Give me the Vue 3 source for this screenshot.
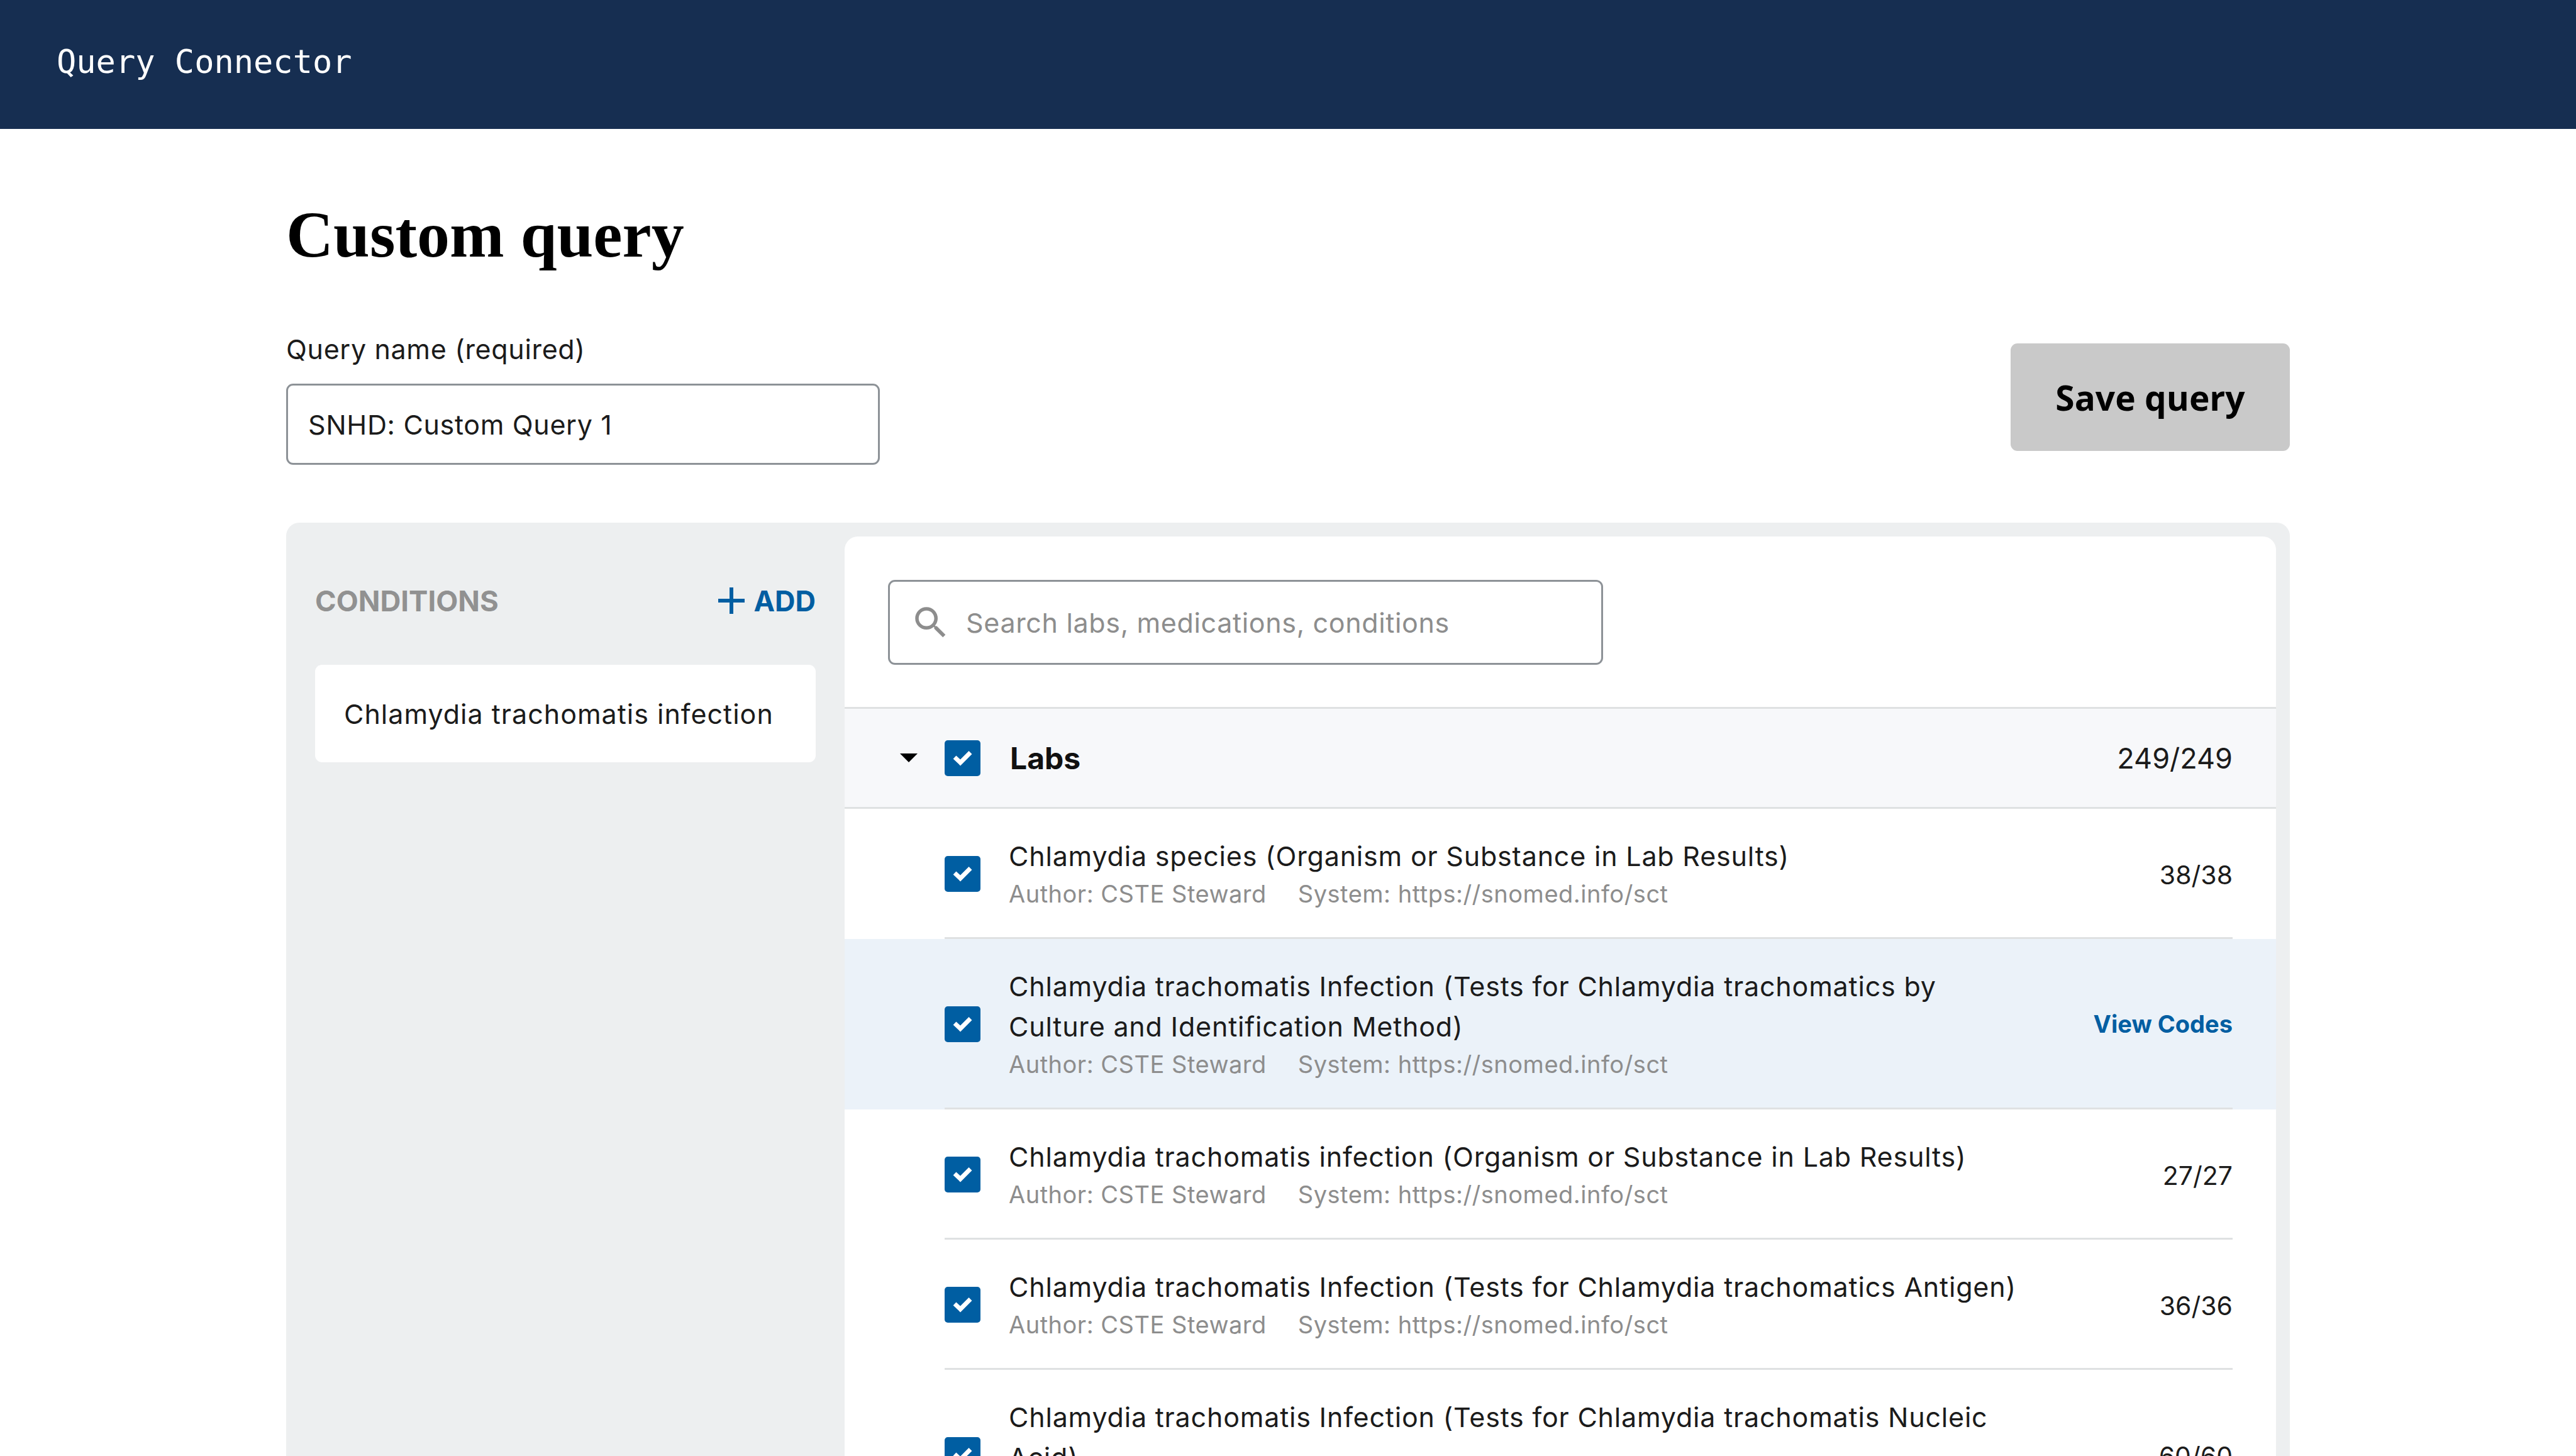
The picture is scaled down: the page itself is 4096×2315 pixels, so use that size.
<template>
  <div class="app">
    <header class="topbar">
      <span class="brand">Query Connector</span>
    </header>

    <main class="page">
      <h1 class="title">Custom query</h1>

      <div class="form-row">
        <label class="field">
          <span class="field-label">Query name (required)</span>
          <input class="field-input" type="text" value="SNHD: Custom Query 1" />
        </label>
        <button type="button" class="save-btn">Save query</button>
      </div>

      <section class="panel">
        <aside class="sidebar">
          <div class="sidebar-head">
            <span class="sidebar-title">CONDITIONS</span>
            <button type="button" class="add-btn">
              <svg class="add-icon" viewBox="0 0 42 42" aria-hidden="true">
                <path d="M21 0v42M0 21h42" fill="none" stroke="currentColor" stroke-width="6" />
              </svg>
              ADD
            </button>
          </div>
          <div class="condition-card">Chlamydia trachomatis infection</div>
        </aside>

        <div class="content">
          <div class="search-wrap">
            <div class="search-box">
              <svg class="search-icon" viewBox="0 0 24 24" aria-hidden="true">
                <path
                  d="M15.5 14h-.79l-.28-.27A6.471 6.471 0 0 0 16 9.5 6.5 6.5 0 1 0 9.5 16c1.61 0 3.09-.59 4.23-1.57l.27.28v.79l5 4.99L20.49 19l-4.99-5zm-6 0C7.01 14 5 11.99 5 9.5S7.01 5 9.5 5 14 7.01 14 9.5 11.99 14 9.5 14z"
                  fill="currentColor"
                />
              </svg>
              <input class="search-input" type="text" placeholder="Search labs, medications, conditions" />
            </div>
          </div>

          <div class="group-head">
            <span class="caret"></span>
            <span class="check">
              <svg viewBox="0 0 57 57" aria-hidden="true">
                <path d="M16 27l9 8.500 16-16" fill="none" stroke="#fff" stroke-width="7" />
              </svg>
            </span>
            <span class="group-name">Labs</span>
            <span class="group-count">249/249</span>
          </div>

          <div v-for="row in rows" :key="row.name" class="row" :class="{ 'row-active': row.active }">
            <div class="row-inner">
              <span class="check">
                <svg viewBox="0 0 57 57" aria-hidden="true">
                  <path d="M16 27l9 8.500 16-16" fill="none" stroke="#fff" stroke-width="7" />
                </svg>
              </span>
              <div class="row-text">
                <div class="row-name">{{ row.name }}</div>
                <div class="row-meta">
                  <span>Author: CSTE Steward</span>
                  <span>System: https://snomed.info/sct</span>
                </div>
              </div>
              <a v-if="row.active" class="view-codes">View Codes</a>
              <span v-else class="row-count">{{ row.count }}</span>
            </div>
          </div>
        </div>
      </section>
    </main>
  </div>
</template>

<script setup>
const rows = [
  { name: "Chlamydia species (Organism or Substance in Lab Results)", count: "38/38" },
  {
    name: "Chlamydia trachomatis Infection (Tests for Chlamydia trachomatics by Culture and Identification Method)",
    count: "41/41",
    active: true,
  },
  { name: "Chlamydia trachomatis infection (Organism or Substance in Lab Results)", count: "27/27" },
  { name: "Chlamydia trachomatis Infection (Tests for Chlamydia trachomatics Antigen)", count: "36/36" },
  { name: "Chlamydia trachomatis Infection (Tests for Chlamydia trachomatis Nucleic Acid)", count: "60/60" },
];
</script>

<style>
html,
body {
  margin: 0;
  background: #fff;
}
</style>

<style scoped>
.app {
  height: 2315px;
  overflow: hidden;
  font-family: Inter, "Liberation Sans", sans-serif;
  color: #1b1b1b;
}

.topbar {
  height: 205px;
  box-sizing: border-box;
  padding-left: 90px;
  display: flex;
  align-items: center;
  background: #162e51;
}

.brand {
  color: #fff;
  font-family: "DejaVu Sans Mono", monospace;
  font-size: 52px;
  line-height: 1;
  position: relative;
  top: -5px;
}

.page {
  padding: 0 455px;
}

.title {
  margin: 0 0 103px;
  padding-top: 110px;
  height: 215px;
  box-sizing: border-box;
  font-family: "Liberation Serif", "DejaVu Serif", serif;
  font-size: 104px;
  line-height: 116px;
  font-weight: 700;
  color: #000;
}

.form-row {
  display: flex;
  justify-content: space-between;
  align-items: flex-start;
}

.field {
  display: block;
  width: 944px;
}

.field-label {
  display: block;
  font-size: 43px;
  line-height: 64px;
  letter-spacing: 0.66px;
}

.field-input {
  display: block;
  width: 100%;
  height: 129px;
  margin-top: 23px;
  box-sizing: border-box;
  border: 3px solid #8d9297;
  border-radius: 11px;
  padding: 0 32px;
  font: inherit;
  font-size: 43px;
  letter-spacing: 0.66px;
  color: #1b1b1b;
  outline: none;
}

.save-btn {
  width: 444px;
  height: 171px;
  margin-top: 23px;
  border: 0;
  border-radius: 11px;
  background: #c9c9c9;
  color: #000;
  font-family: "Open Sans", sans-serif;
  font-size: 55px;
  font-weight: 700;
}

.panel {
  margin-top: 92px;
  height: 1600px;
  display: flex;
  padding: 22px 22px 0 0;
  border-radius: 21px;
  background: #edeff0;
}

.sidebar {
  width: 888px;
  flex: none;
  box-sizing: border-box;
  padding: 66px 46px 0;
}

.sidebar-head {
  display: flex;
  justify-content: space-between;
  align-items: center;
  height: 72px;
}

.sidebar-title {
  font-size: 45.5px;
  font-weight: 700;
  color: #919191;
}

.add-btn {
  display: flex;
  align-items: center;
  gap: 14px;
  border: 0;
  padding: 0;
  background: none;
  color: #005ea2;
  font: inherit;
  font-size: 45px;
  font-weight: 700;
}

.add-icon {
  width: 42px;
  height: 42px;
}

.condition-card {
  margin-top: 66px;
  height: 155px;
  display: flex;
  align-items: center;
  padding-left: 46px;
  border-radius: 11px;
  background: #fff;
  font-size: 43px;
  letter-spacing: 1px;
}

.content {
  flex: 1;
  min-width: 0;
  background: #fff;
  border-radius: 21px 21px 0 0;
}

.search-wrap {
  padding: 69px 0 67px 69px;
}

.search-box {
  width: 1137px;
  height: 135px;
  box-sizing: border-box;
  display: flex;
  align-items: center;
  gap: 21px;
  padding-left: 32px;
  border: 3px solid #8d9297;
  border-radius: 11px;
  color: #8d8d8d;
}

.search-icon {
  width: 66px;
  height: 66px;
  flex: none;
}

.search-input {
  flex: 1;
  min-width: 0;
  border: 0;
  outline: none;
  background: none;
  font: inherit;
  font-size: 43px;
  letter-spacing: 0.66px;
}

.search-input::placeholder {
  color: #8d8d8d;
  opacity: 1;
}

.group-head {
  height: 162px;
  box-sizing: border-box;
  display: flex;
  align-items: center;
  padding: 0 69px 0 88px;
  border-top: 3px solid #dfe1e2;
  border-bottom: 3px solid #dfe1e2;
  background: #f7f8fa;
}

.caret {
  width: 0;
  height: 0;
  margin-right: 43px;
  border-left: 14px solid transparent;
  border-right: 14px solid transparent;
  border-top: 14px solid #000;
}

.check {
  width: 57px;
  height: 57px;
  flex: none;
  display: block;
  border-radius: 5px;
  background: #005ea2;
}

.check svg {
  display: block;
  width: 57px;
  height: 57px;
}

.group-name {
  margin-left: 47px;
  font-size: 48px;
  font-weight: 700;
  color: #111;
}

.group-count {
  margin-left: auto;
  font-size: 45px;
}

.row {
  padding: 0 69px 0 159px;
}

.row-active {
  background: #ebf2f9;
}

.row-inner {
  display: flex;
  align-items: center;
  padding: 43px 0 41px;
  border-bottom: 3px solid #dfe1e2;
}

.row-text {
  width: 1625px;
  margin-left: 45px;
}

.row-name {
  font-size: 43px;
  line-height: 64px;
  letter-spacing: 0.8px;
}

.row-meta {
  display: flex;
  gap: 50px;
  font-size: 38px;
  line-height: 56px;
  letter-spacing: 0.5px;
  color: #8d8d8d;
}

.row-count {
  margin-left: auto;
  padding-top: 4px;
  font-size: 41px;
}

.view-codes {
  margin-left: auto;
  color: #005ea2;
  font-size: 38px;
  font-weight: 700;
}
</style>
